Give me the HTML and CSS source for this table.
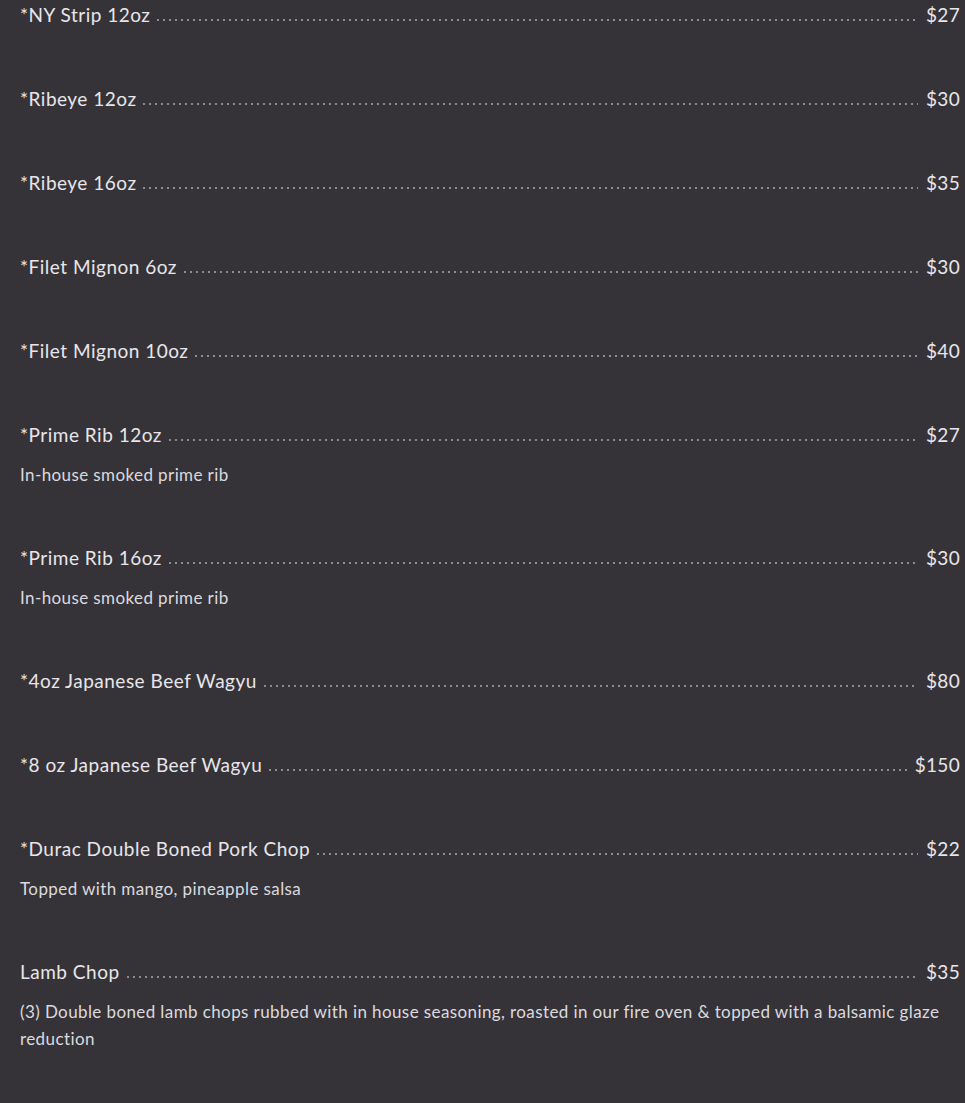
FILE: index.html
```html
<!DOCTYPE html>
<html>
<head>
<meta charset="utf-8">
<link rel="stylesheet" href="styles.css">
</head>
<body>
<div class="menu">
  <div class="item"><div class="row"><span class="name">*NY Strip 12oz</span><span class="dots"></span><span class="price">$27</span></div></div>
  <div class="item"><div class="row"><span class="name">*Ribeye 12oz</span><span class="dots"></span><span class="price">$30</span></div></div>
  <div class="item"><div class="row"><span class="name">*Ribeye 16oz</span><span class="dots"></span><span class="price">$35</span></div></div>
  <div class="item"><div class="row"><span class="name">*Filet Mignon 6oz</span><span class="dots"></span><span class="price">$30</span></div></div>
  <div class="item"><div class="row"><span class="name">*Filet Mignon 10oz</span><span class="dots"></span><span class="price">$40</span></div></div>
  <div class="item"><div class="row"><span class="name">*Prime Rib 12oz</span><span class="dots"></span><span class="price">$27</span></div><p class="desc">In-house smoked prime rib</p></div>
  <div class="item"><div class="row"><span class="name">*Prime Rib 16oz</span><span class="dots"></span><span class="price">$30</span></div><p class="desc">In-house smoked prime rib</p></div>
  <div class="item"><div class="row"><span class="name">*4oz Japanese Beef Wagyu</span><span class="dots"></span><span class="price">$80</span></div></div>
  <div class="item"><div class="row"><span class="name">*8 oz Japanese Beef Wagyu</span><span class="dots"></span><span class="price">$150</span></div></div>
  <div class="item"><div class="row"><span class="name">*Durac Double Boned Pork Chop</span><span class="dots"></span><span class="price">$22</span></div><p class="desc">Topped with mango, pineapple salsa</p></div>
  <div class="item"><div class="row"><span class="name">Lamb Chop</span><span class="dots"></span><span class="price">$35</span></div><p class="desc">(3) Double boned lamb chops rubbed with in house seasoning, roasted in our fire oven &amp; topped with a balsamic glaze reduction</p></div>
</div>
</body>
</html>
```
FILE: styles.css
```css
html, body {
  margin: 0;
  padding: 0;
  background: #353338;
}
body {
  font-family: "Lato", "Open Sans", sans-serif;
  color: #e8e6ea;
}
.menu {
  padding: 1px 5px 0 20px;
  display: flex;
  flex-direction: column;
  gap: 56px;
}
.row {
  display: flex;
  align-items: baseline;
  height: 28px;
  line-height: 28px;
  font-size: 19px;
  letter-spacing: 0.5px;
}
.name {
  white-space: nowrap;
}
.dots {
  flex: 1;
  margin: 0 8px 0 5px;
  height: 4px;
  background-image: radial-gradient(circle, #8e8c91 0.8px, transparent 1.1px);
  background-size: 6px 4px;
  background-repeat: repeat-x;
  align-self: baseline;
}
.price {
  white-space: nowrap;
  letter-spacing: 0.3px;
}
.desc {
  margin: 12px 0 0 0;
  font-size: 17px;
  line-height: 27px;
  letter-spacing: 0.4px;
  color: #dcdadf;
}
```
